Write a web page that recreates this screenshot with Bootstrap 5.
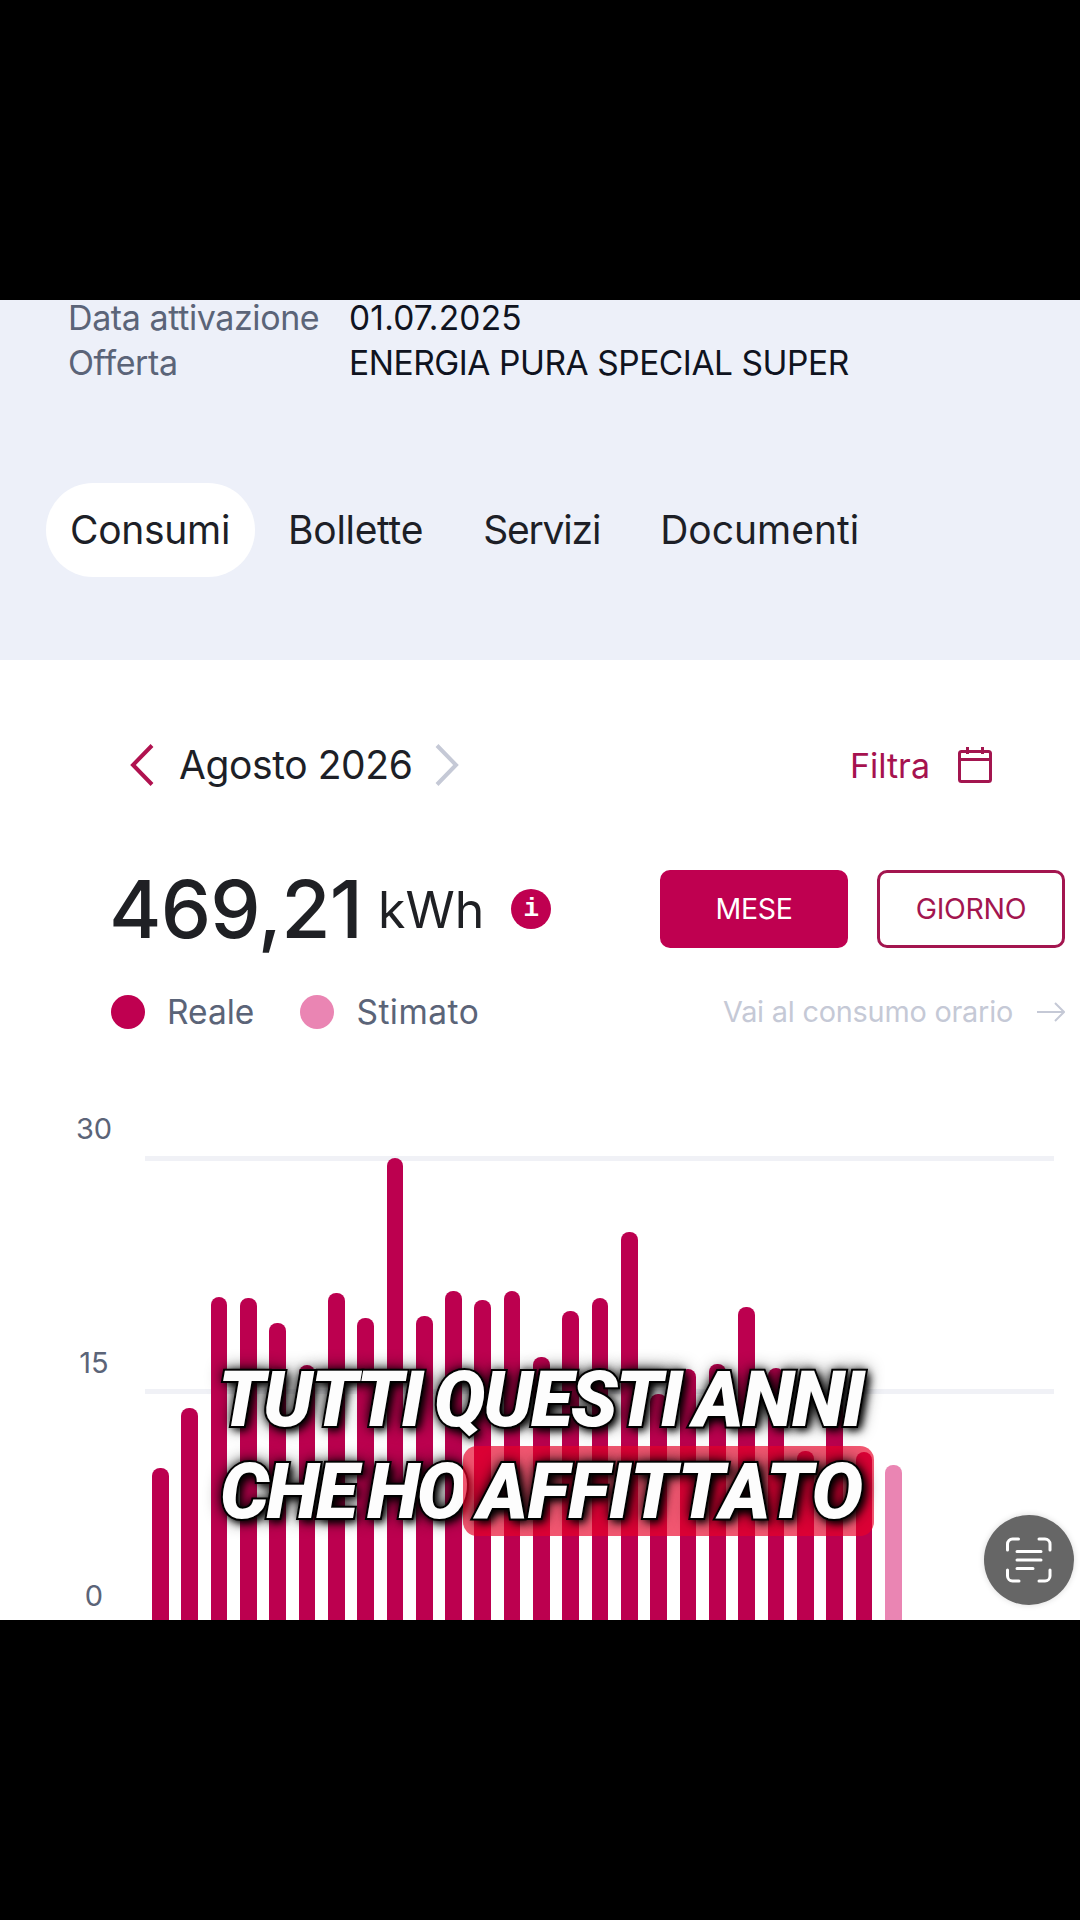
<!DOCTYPE html>
<html lang="en">

<head>
    <meta charset="UTF-8">
    <meta name="viewport" content="width=device-width, initial-scale=1.0">
    <title>Consumi</title>
    <link href="https://cdn.jsdelivr.net/npm/bootstrap@5.3.0/dist/css/bootstrap.min.css" rel="stylesheet">
    <style>
        body {
            background: #000;
            font-family: Inter, "Liberation Sans", sans-serif;
            width: 1080px;
            height: 1920px;
            overflow: hidden;
        }

        .black-strip {
            height: 300px;
            background: #000;
        }

        .app-frame {
            height: 1320px;
            background: #fff;
        }

        /* Header block */
        .head-block {
            height: 360px;
            background: #edf0f9;
            padding-left: 68px;
            font-size: 33.5px;
            letter-spacing: -0.45px;
        }

        .info-row {
            height: 36px;
            line-height: 36px;
            margin-bottom: 9px;
            color: #0f1320;
        }

        .info-label {
            width: 281px;
            font-size: 34px;
            letter-spacing: -0.4px;
            color: #5b6478;
        }

        .info-date {
            letter-spacing: 0.2px;
        }

        .tab-row {
            margin-top: 102px;
            margin-left: -22px;
        }

        .tab-row .nav-link {
            height: 94px;
            line-height: 94px;
            padding: 0 30px;
            color: #1d1f27;
            font-size: 39px;
            letter-spacing: -0.3px;
            border-radius: 47px;
        }

        .tab-row .nav-link.active {
            background: #fff;
            color: #1d1f27;
            padding: 0 25px 0 24px;
            margin-right: 3px;
        }

        .tab-row .tab-narrow {
            letter-spacing: -1.2px;
        }

        .tab-row .tab-wide {
            letter-spacing: 0px;
        }

        /* Month toolbar */
        .month-bar {
            margin-top: 82px;
            height: 46px;
            padding: 0 88px 0 130px;
        }

        .month-name {
            font-size: 39px;
            letter-spacing: -0.4px;
            color: #1d1f27;
            margin: 0 22px 0 25px;
        }

        .filter-label {
            font-size: 34px;
            color: #a6124f;
            margin-right: 28px;
        }

        /* Total + buttons */
        .total-row {
            margin-top: 82px;
            height: 78px;
            padding: 0 15px 0 109px;
        }

        .total-num {
            font-size: 80px;
            font-weight: 500;
            line-height: 78px;
            letter-spacing: -0.8px;
            color: #1f2024;
        }

        .total-unit {
            font-size: 50px;
            color: #1f2024;
            margin-left: 16px;
            margin-right: 27px;
        }

        .info-dot {
            width: 40px;
            height: 40px;
            border-radius: 50%;
            background: #bf0050;
            color: #fff;
            font-family: "Liberation Mono", monospace;
            font-weight: 700;
            font-size: 26px;
            line-height: 40px;
            text-align: center;
        }

        .range-row {
            gap: 29px;
        }

        .range-btn {
            width: 188px;
            height: 78px;
            font-size: 28.5px;
            letter-spacing: -0.3px;
            border-radius: 10px;
            border: 3px solid #a3154f;
            background: #fff;
            color: #a3154f;
            padding: 0;
        }

        .range-btn.is-on {
            background: #bf0050;
            border-color: #bf0050;
            color: #fff;
        }

        /* Legend */
        .legend-row {
            margin-top: 47px;
            height: 34px;
            padding: 0 15px 0 111px;
            font-size: 33.5px;
            color: #5b6478;
        }

        .legend-dot {
            width: 34px;
            height: 34px;
            border-radius: 50%;
            margin-right: 22px;
        }

        .legend-gap {
            margin-right: 46px;
        }

        .legend-wide {
            letter-spacing: 0.5px;
        }

        .hour-link {
            font-size: 28.8px;
            letter-spacing: -0.2px;
            color: #c5c9d6;
        }

        /* Chart */
        .chart-box {
            position: relative;
            margin-top: 71px;
            height: 520px;
        }

        .grid-line {
            position: absolute;
            left: 145px;
            width: 909px;
            height: 5px;
            background: #f0f1f6;
        }

        .axis-label {
            position: absolute;
            left: 64px;
            width: 60px;
            text-align: center;
            font-size: 29px;
            line-height: 32px;
            color: #5b6478;
        }

        .bar-strip {
            position: absolute;
            left: 152px;
            bottom: 0;
            gap: 12.63px;
        }

        .one-bar {
            width: 16.7px;
            background: #bc004f;
            border-radius: 8px 8px 0 0;
        }

        .one-bar.is-est {
            background: #ea85b3;
        }

        /* Caption over the video */
        .caption-block {
            position: absolute;
            left: 220px;
            top: 1355px;
            width: 700px;
            font-family: Roboto, "Liberation Sans", sans-serif;
            font-weight: 900;
            font-style: italic;
            font-size: 77px;
            line-height: 91px;
            letter-spacing: -2.6px;
            word-spacing: -5px;
            color: #fdfdfd;
            white-space: nowrap;
            -webkit-text-stroke: 4px #050505;
            paint-order: stroke fill;
            text-shadow: 0 0 10px #000, 0 0 18px rgba(0, 0, 0, .9), 4px 4px 8px #000;
        }

        .caption-first {
            margin-left: -2px;
            letter-spacing: -2.05px;
        }

        .caption-mark {
            display: inline-block;
            line-height: 87px;
            padding: 3px 11px 0 14px;
            margin-left: -14px;
            letter-spacing: -0.3px;
            background: rgba(235, 0, 40, .66);
            border-radius: 14px;
        }

        .scan-btn {
            position: absolute;
            left: 984px;
            top: 1515px;
            width: 90px;
            height: 90px;
            border-radius: 50%;
            background: #666;
            box-shadow: 0 0 6px rgba(0, 0, 0, .15);
        }
    </style>
</head>

<body class="m-0">
    <div class="black-strip"></div>

    <div class="app-frame">
        <!-- Header -->
        <div class="head-block">
            <div class="info-row d-flex"><span class="info-label">Data attivazione</span><span class="info-date">01.07.2025</span></div>
            <div class="info-row d-flex"><span class="info-label">Offerta</span><span>ENERGIA PURA SPECIAL SUPER</span></div>
            <ul class="nav nav-pills tab-row">
                <li class="nav-item"><a class="nav-link active" href="#">Consumi</a></li>
                <li class="nav-item"><a class="nav-link" href="#">Bollette</a></li>
                <li class="nav-item"><a class="nav-link tab-narrow" href="#">Servizi</a></li>
                <li class="nav-item"><a class="nav-link tab-wide" href="#">Documenti</a></li>
            </ul>
        </div>

        <!-- Month -->
        <div class="month-bar d-flex align-items-center justify-content-between">
            <div class="d-flex align-items-center">
                <svg width="24" height="42" viewBox="0 0 24 42" fill="none" stroke="#b0124f" stroke-width="4"><path d="M22 1.5 3 21l19 19.5"/></svg>
                <span class="month-name">Agosto 2026</span>
                <svg width="24" height="42" viewBox="0 0 24 42" fill="none" stroke="#c5c9d6" stroke-width="4"><path d="M2 1.5 21 21 2 40.5"/></svg>
            </div>
            <div class="d-flex align-items-center">
                <span class="filter-label">Filtra</span>
                <svg width="34" height="36" viewBox="0 0 34 36" fill="none" stroke="#a3154f" stroke-width="3"><rect x="1.5" y="4.5" width="31" height="30" rx="2"/><path d="M1.5 12.5h31M9.500 0v7M24.500 0v7"/></svg>
            </div>
        </div>

        <!-- Total -->
        <div class="total-row d-flex align-items-center justify-content-between">
            <div class="d-flex align-items-center">
                <span class="total-num">469,21</span>
                <span class="total-unit align-self-end">kWh</span>
                <span class="info-dot">i</span>
            </div>
            <div class="d-flex range-row">
                <button class="btn range-btn is-on" type="button">MESE</button>
                <button class="btn range-btn" type="button">GIORNO</button>
            </div>
        </div>

        <!-- Legend -->
        <div class="legend-row d-flex align-items-center justify-content-between">
            <div class="d-flex align-items-center">
                <span class="legend-dot" style="background:#bf0050"></span><span class="legend-gap">Reale</span>
                <span class="legend-dot" style="background:#ea85b3"></span><span class="legend-wide">Stimato</span>
            </div>
            <div class="d-flex align-items-center">
                <span class="hour-link">Vai al consumo orario</span>
                <svg class="ms-4" width="28" height="20" viewBox="0 0 28 20" fill="none" stroke="#c5c9d6" stroke-width="2"><path d="M0 10h26M18 1l9 9-9 9"/></svg>
            </div>
        </div>

        <!-- Chart -->
        <div class="chart-box">
            <span class="axis-label" style="top:13px">30</span>
            <span class="axis-label" style="top:247px">15</span>
            <span class="axis-label" style="top:480px">0</span>
            <div class="grid-line" style="top:56px"></div>
            <div class="grid-line" style="top:289px"></div>
            <div class="bar-strip d-flex align-items-end" id="bars"></div>
        </div>
    </div>

    <div class="black-strip"></div>

    <div class="caption-block">
        <div class="caption-first">TUTTI QUESTI ANNI</div>
        <div>CHE HO <span class="caption-mark">AFFITTATO</span></div>
    </div>

    <div class="scan-btn d-flex align-items-center justify-content-center">
        <svg width="46" height="46" viewBox="0 0 46 46" fill="none" stroke="#fff" stroke-width="3" stroke-linecap="round">
            <path d="M1.500 13V7a5 5 0 0 1 5-5h6M33 2h6a5 5 0 0 1 5 5v6M44 33v6a5 5 0 0 1-5 5h-6M13 44H6.500a5 5 0 0 1-5-5v-6"/>
            <path d="M11 14.500h24M11 23h24M11 31.500h16"/>
        </svg>
    </div>

    <script>
        // top of each bar in page pixels, the frame ends at 1620
        const barTops = [1468, 1408, 1297, 1298, 1323, 1365, 1293, 1318, 1158, 1316, 1291, 1300, 1291,
            1357, 1311, 1298, 1232, 1394, 1369, 1364, 1307, 1368, 1451, 1400, 1452, 1465];
        const barBox = document.getElementById("bars");
        barTops.forEach((top, i) => {
            const bar = document.createElement("div");
            bar.className = i === 25 ? "one-bar is-est" : "one-bar";
            bar.style.height = (1620 - top) + "px";
            barBox.appendChild(bar);
        });
    </script>
    <script src="https://cdn.jsdelivr.net/npm/bootstrap@5.3.0/dist/js/bootstrap.bundle.min.js"></script>
</body>

</html>
